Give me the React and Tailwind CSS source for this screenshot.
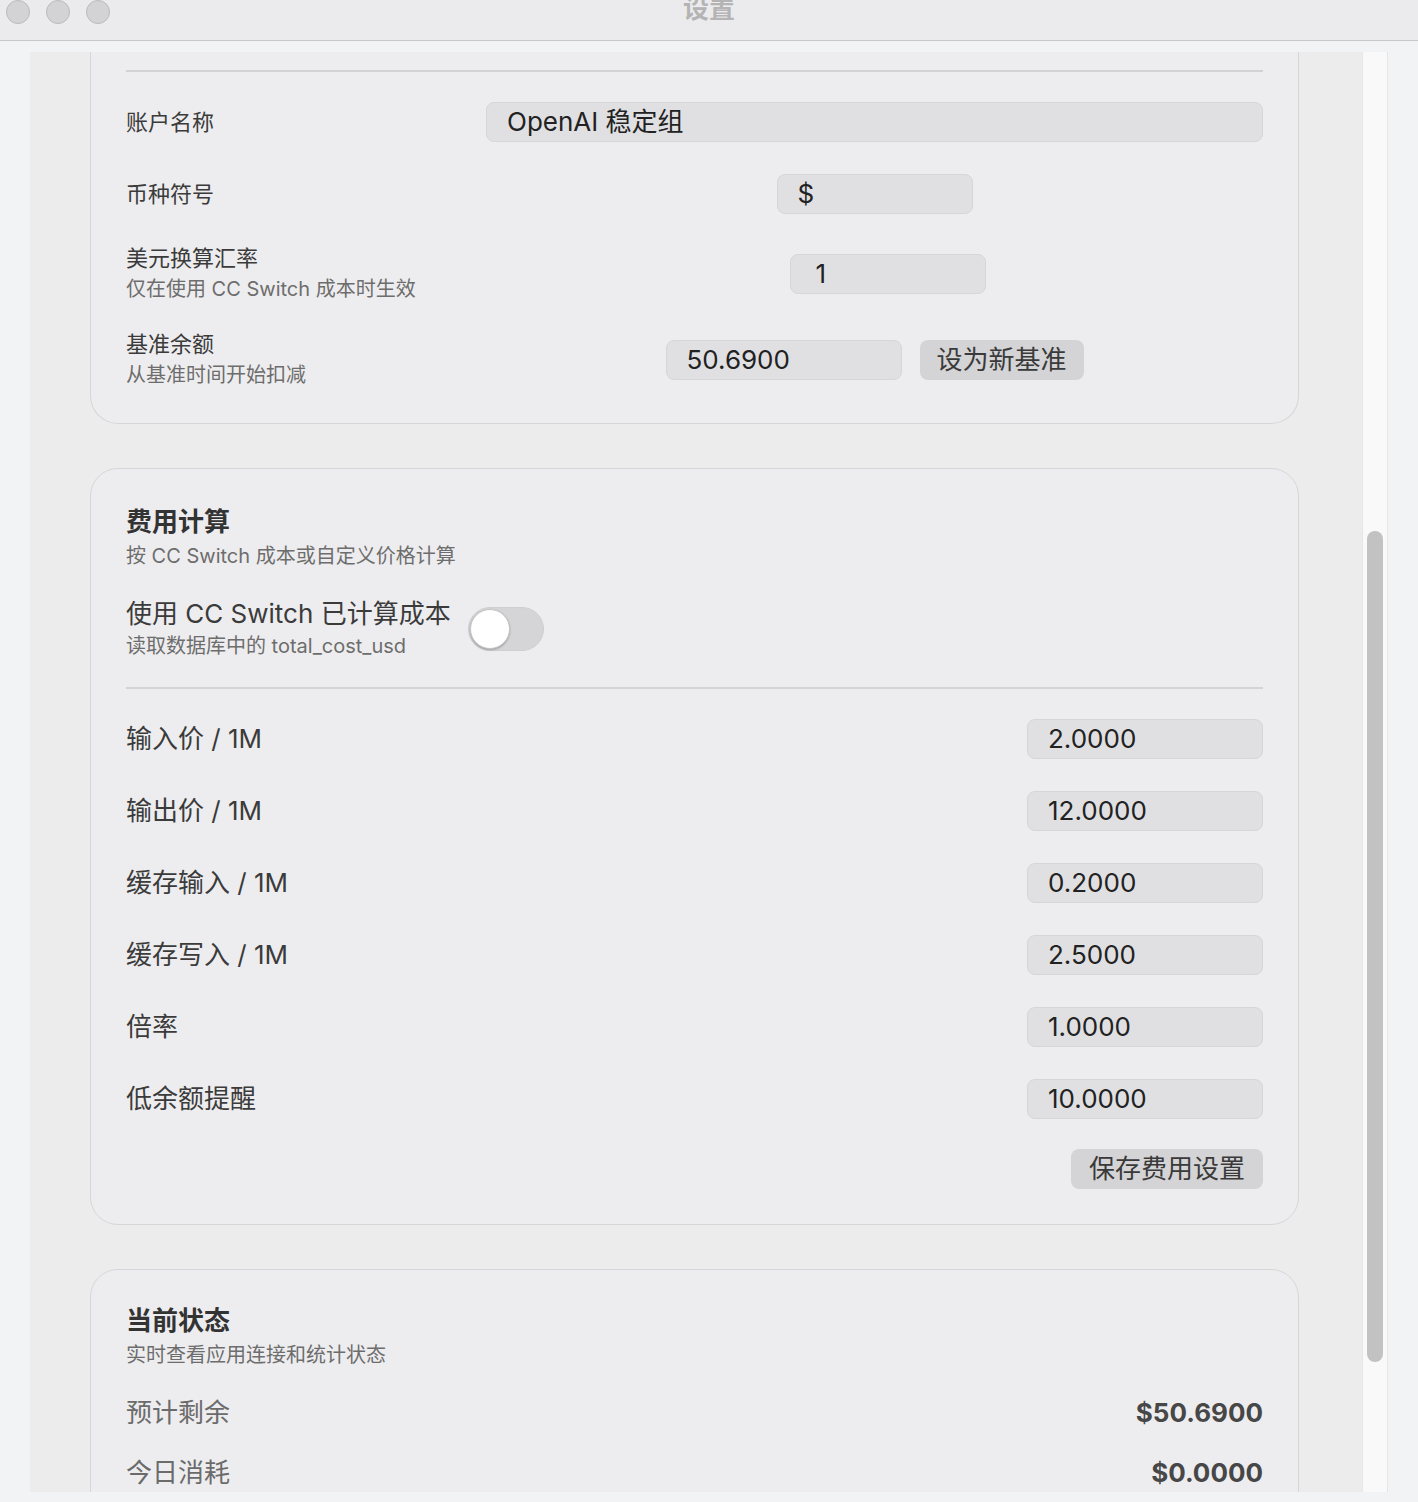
import React from "react";

const FONT = { fontFamily: 'Inter, "Noto Sans CJK SC", sans-serif' };

function Field({ value, className = "" }) {
  return (
    <div
      className={`h-[40px] rounded-[8px] border border-[#d6d6d8] bg-[#e0e0e2] pl-[20px] flex items-center text-[26px] leading-none text-[#222222] ${className}`}
    >
      {value}
    </div>
  );
}

function Button({ children, className = "" }) {
  return (
    <div
      className={`h-[40px] rounded-[8px] bg-[#d4d4d6] flex items-center justify-center text-[26px] leading-none text-[#3a3a3a] ${className}`}
    >
      {children}
    </div>
  );
}

function CardHeader({ title, subtitle }) {
  return (
    <div className="flex flex-col">
      <div className="text-[26px] leading-[32px] font-bold text-[#333333]">{title}</div>
      <div className="mt-[4px] text-[20px] leading-[28px] text-[#6d6d6d]">{subtitle}</div>
    </div>
  );
}

function PriceRow({ label, value }) {
  return (
    <div className="flex items-center justify-between h-[40px]">
      <div className="text-[26px] leading-[32px] text-[#3b3b3b]">{label}</div>
      <Field value={value} className="w-[236px]" />
    </div>
  );
}

function Toggle() {
  return (
    <div className="relative w-[76px] h-[44px] rounded-full bg-[#d5d5d7] border border-[#cfcfd1]">
      <div className="absolute left-[1px] top-[1px] w-[40px] h-[40px] rounded-full bg-white border border-[#c4c4c4] shadow-[0_1px_2px_rgba(0,0,0,0.25)]" />
    </div>
  );
}

function TwoLineLabel({ title, hint }) {
  return (
    <div className="flex flex-col">
      <div className="text-[22px] leading-[28px] text-[#3b3b3b]">{title}</div>
      <div className="mt-[3px] text-[20px] leading-[28px] text-[#6d6d6d] whitespace-nowrap">{hint}</div>
    </div>
  );
}

export default function App() {
  const prices = [
    ["输入价 / 1M", "2.0000"],
    ["输出价 / 1M", "12.0000"],
    ["缓存输入 / 1M", "0.2000"],
    ["缓存写入 / 1M", "2.5000"],
    ["倍率", "1.0000"],
    ["低余额提醒", "10.0000"],
  ];

  return (
    <div style={FONT} className="w-[1418px] h-[1502px] bg-[#f2f3f5] flex flex-col overflow-hidden">
      {/* title bar */}
      <div className="relative h-[41px] shrink-0 bg-[#ebebed] border-b border-[#c8c8ca] flex">
        <div className="flex gap-[16px] pl-[6px] pt-0">
          <div className="w-[24px] h-[24px] rounded-full bg-[#d3d3d5] border border-[#bababa]" />
          <div className="w-[24px] h-[24px] rounded-full bg-[#d3d3d5] border border-[#bababa]" />
          <div className="w-[24px] h-[24px] rounded-full bg-[#d3d3d5] border border-[#bababa]" />
        </div>
        <div className="absolute left-0 right-0 -top-[7px] flex justify-center text-[26px] leading-[32px] font-bold text-[#b4b4b4]">
          设置
        </div>
      </div>

      {/* window body */}
      <div className="flex-1 flex pt-[11px] pb-[10px] px-[30px] min-h-0">
        <div className="flex-1 bg-[#ececec] overflow-hidden pl-[60px] pr-[63px]">
          <div className="flex flex-col">
            {/* account card (scrolled, top edge out of view) */}
            <div className="border-x border-b border-[#d6d6d8] rounded-b-[28px] bg-[#ededef] px-[35px] pt-[18px] pb-[35px]">
              <div className="h-[2px] bg-[#d2d2d4]" />
              <div className="grid grid-cols-[360px_1fr] items-center mt-[30px]">
                <div className="text-[22px] leading-[30px] text-[#3b3b3b]">账户名称</div>
                <Field value="OpenAI 稳定组" className="w-full" />
              </div>
              <div className="grid grid-cols-[360px_1fr] items-center mt-[32px]">
                <div className="text-[22px] leading-[30px] text-[#3b3b3b]">币种符号</div>
                <div className="flex justify-center">
                  <Field value="$" className="w-[196px]" />
                </div>
              </div>
              <div className="grid grid-cols-[360px_1fr] items-center mt-[30px] h-[58px]">
                <TwoLineLabel title="美元换算汇率" hint="仅在使用 CC Switch 成本时生效" />
                <div className="flex justify-center pl-[26px]">
                  <Field value="1" className="w-[196px] pl-[25px]" />
                </div>
              </div>
              <div className="grid grid-cols-[360px_1fr] items-center mt-[28px] h-[58px]">
                <TwoLineLabel title="基准余额" hint="从基准时间开始扣减" />
                <div className="flex justify-center gap-[18px]">
                  <Field value="50.6900" className="w-[236px]" />
                  <Button className="w-[164px]">设为新基准</Button>
                </div>
              </div>
            </div>

            {/* cost calculation card */}
            <div className="mt-[44px] border border-[#d6d6d8] rounded-[28px] bg-[#ededef] px-[35px] pt-[37px] pb-[35px]">
              <CardHeader title="费用计算" subtitle="按 CC Switch 成本或自定义价格计算" />
              <div className="mt-[28px] flex items-center gap-[17px]">
                <div className="flex flex-col">
                  <div className="text-[26px] leading-[32px] text-[#3b3b3b]">使用 CC Switch 已计算成本</div>
                  <div className="mt-[2px] text-[20px] leading-[28px] text-[#6d6d6d]">读取数据库中的 total_cost_usd</div>
                </div>
                <Toggle />
              </div>
              <div className="mt-[27px] h-[2px] bg-[#d4d4d6]" />
              <div className="mt-[30px] flex flex-col gap-[32px]">
                {prices.map(([label, value]) => (
                  <PriceRow key={label} label={label} value={value} />
                ))}
              </div>
              <div className="mt-[30px] flex justify-end">
                <Button className="w-[192px]">保存费用设置</Button>
              </div>
            </div>

            {/* status card */}
            <div className="mt-[44px] border border-[#d6d6d8] rounded-[28px] bg-[#ededef] px-[35px] pt-[35px] pb-[35px]">
              <CardHeader title="当前状态" subtitle="实时查看应用连接和统计状态" />
              <div className="mt-[28px] flex items-center justify-between">
                <div className="text-[26px] leading-[32px] text-[#6b6b6b]">预计剩余</div>
                <div className="text-[26px] leading-[32px] font-bold text-[#474747]">$50.6900</div>
              </div>
              <div className="mt-[28px] flex items-center justify-between">
                <div className="text-[26px] leading-[32px] text-[#6b6b6b]">今日消耗</div>
                <div className="text-[26px] leading-[32px] font-bold text-[#474747]">$0.0000</div>
              </div>
            </div>
          </div>
        </div>

        {/* scroll track */}
        <div className="w-[26px] shrink-0 bg-[#f9f9f9] border-x border-[#e6e6e6] pt-[479px] flex justify-center">
          <div className="w-[16px] h-[831px] rounded-full bg-[#c2c2c2]" />
        </div>
      </div>
    </div>
  );
}
